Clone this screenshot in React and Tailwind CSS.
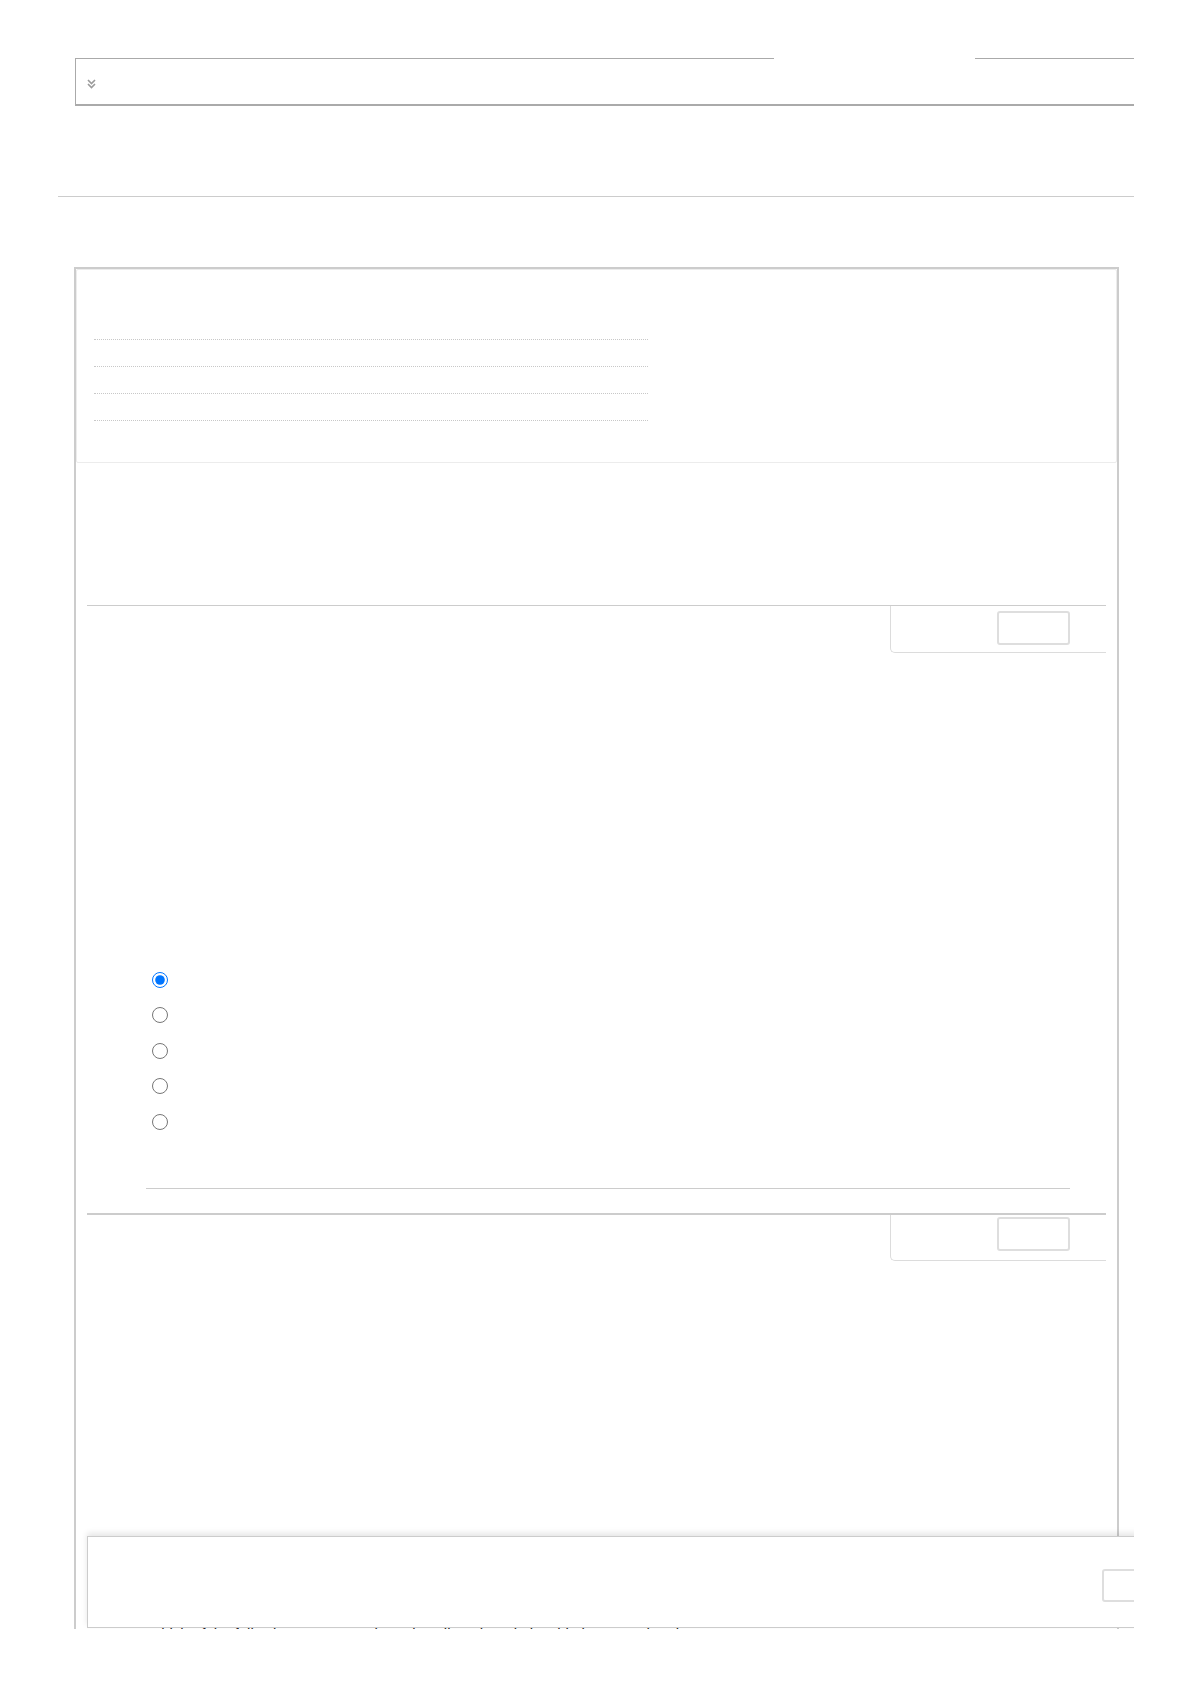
import React from "react";

const rows = [0, 1, 2, 3];
const choices = ["a", "b", "c", "d", "e"];

function DoubleChevron() {
  return (
    <svg width="9" height="10" viewBox="0 0 9 10" fill="none" stroke="#9a9a9a" strokeWidth="1.6">
      <path d="M1 1l3.5 3.5L8 1" />
      <path d="M1 5l3.5 3.5L8 5" />
    </svg>
  );
}

function InfoBox({ top }) {
  return (
    <div className="flex justify-end">
      <div className={`w-[216px] border-l border-b border-[#dcdcdc] rounded-bl-[5px] pl-[106px] ${top}`}>
        <button className="block w-[73px] h-[34px] border-2 border-[#dedede] rounded-[3px] bg-white" />
      </div>
    </div>
  );
}

export default function App() {
  return (
    <div className="relative w-[1134px] h-[1629px] overflow-hidden bg-white font-['Liberation_Sans',Arial,sans-serif]">
      <div className="pt-[58px]">
        {/* collapsible header block */}
        <div className="ml-[75px]">
          <div className="flex h-px">
            <div className="w-[699px] border-t border-[#aaaaaa]" />
            <div className="w-[201px]" />
            <div className="flex-1 border-t border-[#aaaaaa]" />
          </div>
          <div className="h-[47px] border-l border-b-2 border-[#aaaaaa] pl-[11px] pt-[20px]">
            <DoubleChevron />
          </div>
        </div>

        <div className="ml-[58px] mt-[90px] border-t border-[#cccccc]" />

        {/* main content column */}
        <div className="ml-[74px] mt-[70px] w-[1045px] border-2 border-b-0 border-[#cccccc] pb-[600px]">
          <div className="h-[194px] border border-[#ececec] rounded-[2px] pl-[17px] pt-[43px]">
            {rows.map((r) => (
              <div key={r} className="w-[554px] h-[27px] border-b border-dotted border-[#c8c8c8]" />
            ))}
          </div>

          {/* question 1 */}
          <div className="ml-[11px] mr-[11px] mt-[142px] border-t border-[#cccccc]">
            <InfoBox top="h-[47px] pt-[5px]" />
            <div className="ml-[65px] mt-[309px]">
              {choices.map((c, i) => (
                <label key={c} className="flex items-center h-[35.5px]">
                  <input
                    type="radio"
                    name="q1"
                    defaultChecked={i === 0}
                    className="m-0 w-[16px] h-[16px]"
                  />
                </label>
              ))}
            </div>
            <div className="ml-[59px] w-[924px] mt-[48px] border-t border-[#cccccc]" />
          </div>

          {/* question 2 */}
          <div className="ml-[11px] mr-[11px] mt-[24px] border-t-2 border-[#cccccc]">
            <InfoBox top="h-[46px] pt-[2px]" />
            <p className="ml-[60px] mt-[363px] text-[15px] leading-[20px] text-[#222]">
              Which of the following statements best describes the relationship between the given terms?
            </p>
          </div>
        </div>
      </div>

      {/* sticky navigation footer */}
      <div className="absolute left-[87px] top-[1536px] w-[1100px] h-[92px] border border-[#cccccc] bg-white shadow-[0_-3px_6px_rgba(0,0,0,0.10)] pl-[1014px] pt-[32px]">
        <button className="block w-[73px] h-[33px] border-2 border-[#dedede] rounded-[3px] bg-white" />
      </div>
    </div>
  );
}
